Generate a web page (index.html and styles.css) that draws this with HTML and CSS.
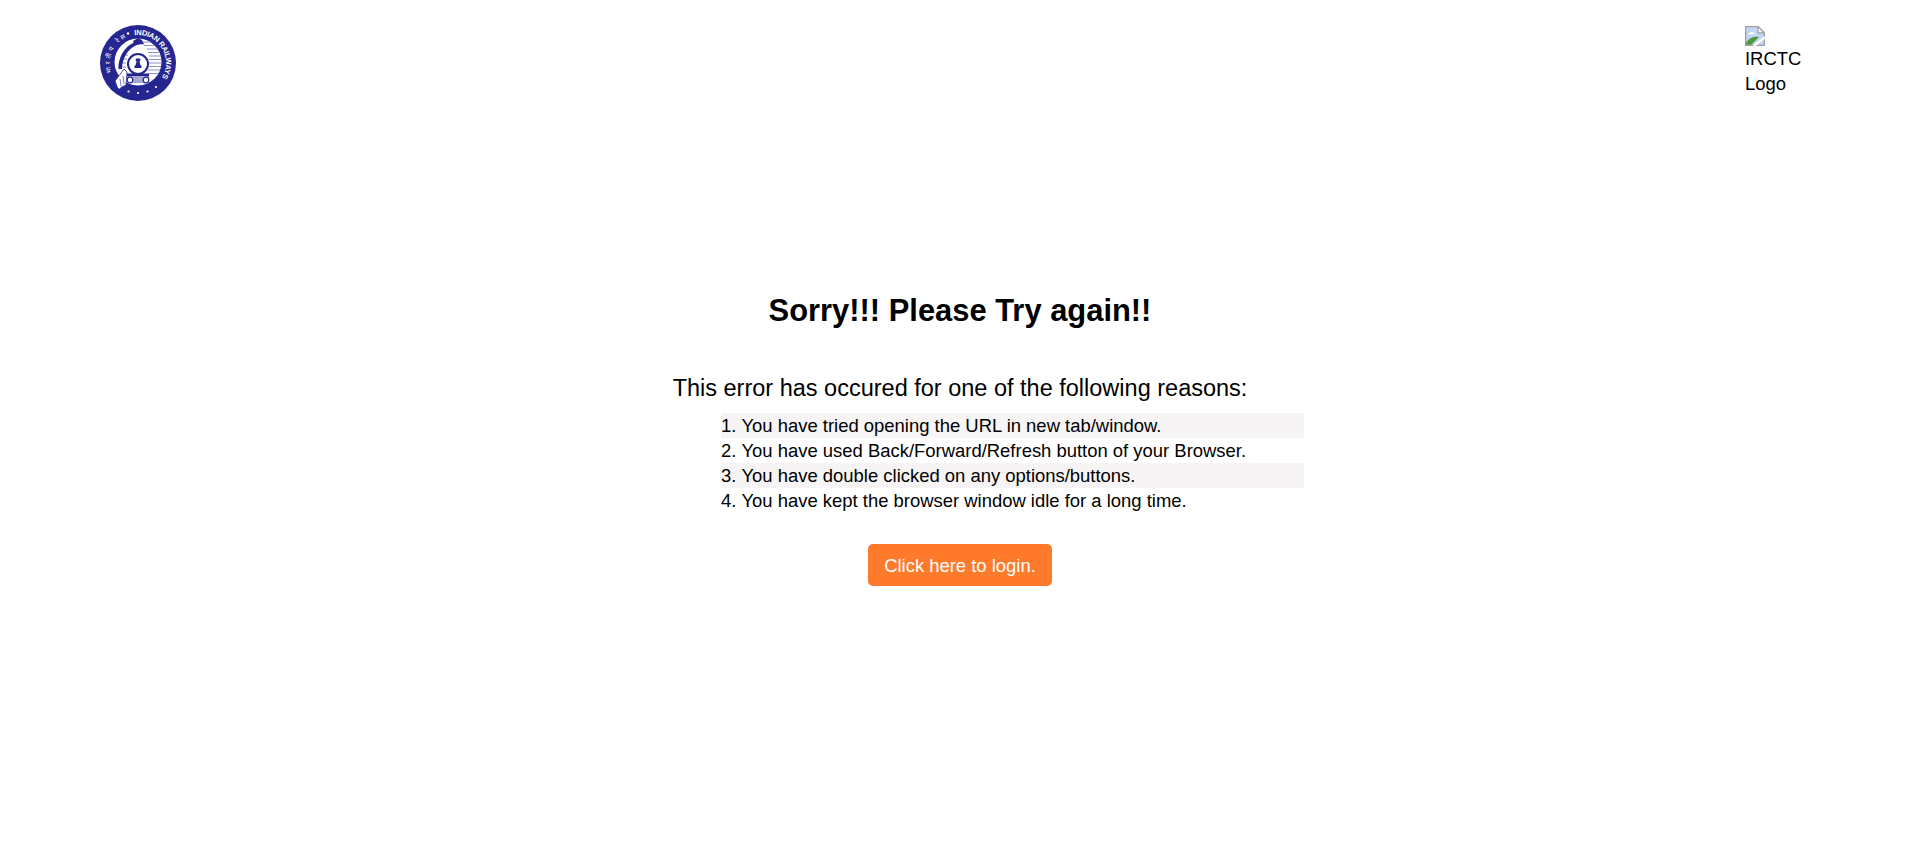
FILE: index.html
```html
<!DOCTYPE html>
<html lang="en">
<head>
    <meta charset="UTF-8">
    <title>IRCTC</title>
    <link rel="stylesheet" href="styles.css">
</head>
<body>
<div class="header">
    <svg class="rail-logo" viewBox="0 0 76 76" role="img" aria-label="Indian Railways Logo">
        <defs>
            <path id="ringRight" d="M34.600 10.200A28 28 0 0 1 61.700 52.800"/>
            <path id="ringLeft" d="M11.700 47.600A28 28 0 0 1 26.200 12.600"/>
        </defs>
        <circle cx="38" cy="38" r="38" fill="#25268f"/>
        <text class="ring-text"><textPath href="#ringRight" textLength="62.500">INDIAN RAILWAYS</textPath></text>
        <text class="ring-text ring-small"><textPath href="#ringLeft" textLength="41">भारतीय रेल</textPath></text>
        <circle cx="38" cy="37" r="23.500" fill="#fff"/>
        <!-- stripes behind the engine -->
        <g stroke="#8f90cc" stroke-width="1">
            <path d="M40 17h11M44 20.500h11M47 24h11M48 27.500h12M49 31h12M49 34.500h12.500M49 38h12.500M49 41.500h12M48 45h12M48 48.500h10M24 30h4M22 34h5M21 38h5M21 42h5"/>
        </g>
        <!-- boiler arch -->
        <path d="M18.500 44C18 28 31 14 43 17l1 2.500C33 18 22.500 29 22 44z" fill="#25268f"/>
        <path d="M33 16l5-3 4 2 1 4-5-1-4 1z" fill="#25268f"/>
        <!-- front of engine with the emblem -->
        <circle cx="38" cy="39" r="10" fill="#fff" stroke="#25268f" stroke-width="2"/>
        <path d="M36 33.500h4l.5 1.500-1 1.500 1 4h1v2.500h-7V40.500h1l1-4-1-1.500z" fill="#25268f"/>
        <path d="M27 48.500h22v2.500H27z" fill="#25268f"/>
        <path d="M28 51h20v6H28z" fill="#fff" stroke="#25268f" stroke-width=".8"/>
        <path d="M33 53h10M33 55h10" stroke="#25268f" stroke-width=".8"/>
        <circle cx="30" cy="55" r="2.800" fill="#fff" stroke="#25268f" stroke-width="1.200"/>
        <circle cx="46" cy="55" r="2.800" fill="#fff" stroke="#25268f" stroke-width="1.200"/>
        <!-- cowcatcher -->
        <path d="M24 44l-9 12 3 8 8-4 1-13z" fill="#fff" stroke="#25268f" stroke-width=".8"/>
        <path d="M20 54l1 7M23 51l1 8" stroke="#25268f" stroke-width=".6"/>
        <g fill="#fff">
            <circle cx="28" cy="8.500" r="1.200"/>
            <circle cx="38" cy="68" r="1.100"/>
            <circle cx="28.500" cy="66.500" r="1.100"/>
            <circle cx="47.500" cy="66.500" r="1.100"/>
            <circle cx="56" cy="62" r="1.100"/>
            <circle cx="19.500" cy="62.500" r="1.100"/>
        </g>
    </svg>
    <div class="broken-logo">
        <svg class="broken-icon" viewBox="0 0 16 16" aria-hidden="true">
            <path d="M.5.500h10l5 5v10H.5z" fill="#c3d5f3" stroke="#a0a0a0"/>
            <path d="M10.500.500v5h5z" fill="#fff" stroke="#a0a0a0"/>
            <path d="M2.500 6.500c1-2 5-2 6 0z" fill="#fff"/>
            <path d="M1 15v-2c3-4 7-5 10-4l-6 6z" fill="#4c9a3c"/>
            <path d="M7 16L16 9" stroke="#fff" stroke-width="2"/>
        </svg>
        IRCTC Logo
    </div>
</div>

<div class="error-box">
    <h1>Sorry!!! Please Try again!!</h1>
    <p class="reason-title">This error has occured for one of the following reasons:</p>
    <ol class="reasons">
        <li>You have tried opening the URL in new tab/window.</li>
        <li>You have used Back/Forward/Refresh button of your Browser.</li>
        <li>You have double clicked on any options/buttons.</li>
        <li>You have kept the browser window idle for a long time.</li>
    </ol>
    <a class="login-btn" href="#">Click here to login.</a>
</div>
</body>
</html>
```

FILE: styles.css
```css
body {
    margin: 0;
    font-family: "Liberation Sans", Arial, sans-serif;
    font-size: 18.450px;
    line-height: 25px;
    color: #000;
    background: #fff;
}
.header {
    display: flex;
    justify-content: space-between;
    padding: 25px 91px 0 100px;
}
.rail-logo {
    width: 76px;
    height: 76px;
}
.ring-text {
    font-size: 7.500px;
    font-weight: bold;
    fill: #fff;
}
.ring-small {
    font-size: 6.500px;
    font-weight: normal;
    font-family: "Noto Sans", "DejaVu Sans", sans-serif;
}
.broken-logo {
    width: 84px;
    margin-top: 1px;
    line-height: 24.500px;
}
.broken-icon {
    display: block;
    width: 20px;
    height: 20px;
    margin-bottom: 1px;
}
.error-box {
    width: 688px;
    margin: 190px auto 0;
    display: flex;
    flex-direction: column;
    align-items: center;
}
h1 {
    margin: 0;
    font-size: 30.900px;
    line-height: 40px;
}
.reason-title {
    margin: 41px 0 0;
    font-size: 23.500px;
    line-height: 32px;
}
.reasons {
    align-self: stretch;
    margin: 9px 0 0 105px;
    padding: 0;
    list-style-position: inside;
}
.reasons li:nth-child(odd) {
    background: #f6f4f5;
}
.login-btn {
    margin-top: 31px;
    padding: 8.500px 16px;
    background: #ff7a2b;
    color: #fff;
    border-radius: 5px;
    text-decoration: none;
}
```
